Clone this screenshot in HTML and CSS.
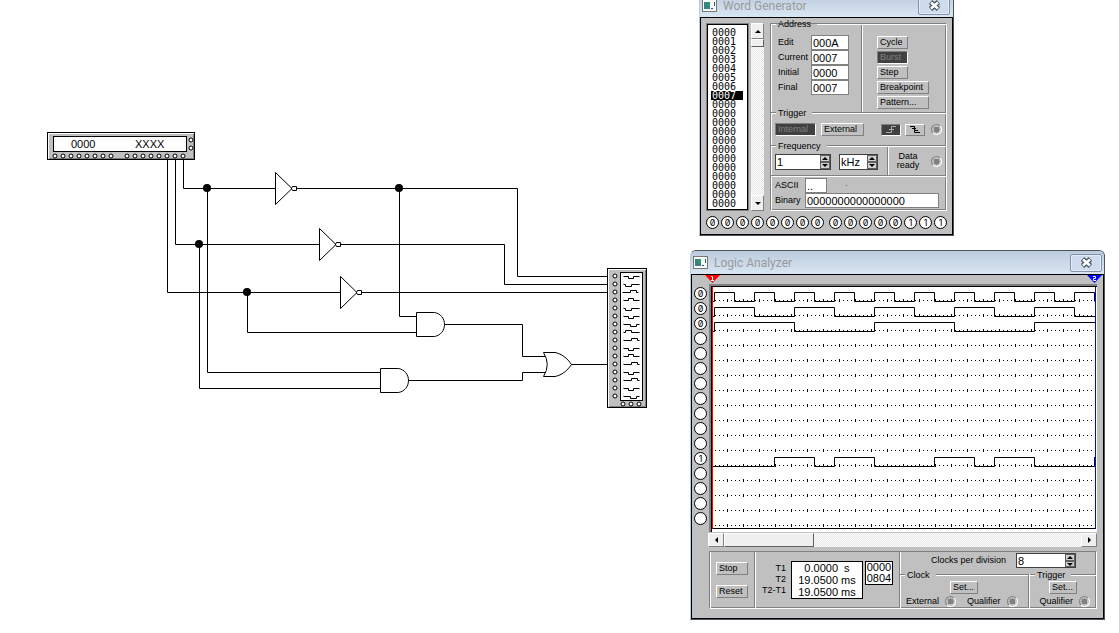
FILE: index.html
```html
<!DOCTYPE html>
<html lang="en">
<head>
<meta charset="utf-8">
<title>Logic circuit</title>
<link rel="stylesheet" href="styles.css">
</head>
<body>
<main class="desktop">
<svg class="circuit" width="690" height="620" viewBox="0 0 690 620" role="img" aria-label="Circuit diagram">
  <defs>
    <circle id="pin" r="2" fill="#fff" stroke="#000"/>
    <g id="pins8"><use href="#pin"/><use href="#pin" x="8"/><use href="#pin" x="16"/><use href="#pin" x="24"/><use href="#pin" x="32"/><use href="#pin" x="40"/><use href="#pin" x="48"/><use href="#pin" x="56"/></g>
    <g id="col8"><use href="#pin"/><use href="#pin" y="8"/><use href="#pin" y="16"/><use href="#pin" y="24"/><use href="#pin" y="32"/><use href="#pin" y="40"/><use href="#pin" y="48"/><use href="#pin" y="56"/></g>
    <path id="inv" d="M0 -16V16L16.5 0ZM17 -2H21V2H17L16 0Z" fill="#fff" stroke="#000"/>
    <path id="and" d="M0 -12H18C24 -11 28 -6 28 0S24 11 18 12H0Z" fill="#fff" stroke="#000"/>
    <path id="dm" d="M0 0H5V2H10V0H16"/><path id="dl" d="M0 0H2V2H8V0H16"/><path id="dr" d="M0 0H7V2H13V0H16"/>
    <path id="um" d="M0 0H5V-2H10V0H16"/><path id="ul" d="M0 0H2V-2H8V0H16"/><path id="ur" d="M0 0H8V-2H14V0H16"/>
  </defs>
  <g fill="none" stroke="#000">
    <path d="M183.5 158V188.5H275M297 188.5H517.5V276.5H608"/>
    <path d="M175.5 158V244.5H319M341 244.5H504.5V284.5H608"/>
    <path d="M167.5 158V292.5H340M362 292.5H608"/>
    <path d="M399.5 188V316.5H416M247.5 292V332.5H416M207.5 188V372.5H380M199.5 244V388.5H380"/>
    <path d="M444 324.5H522.5V356.5H545M408 380.5H522.5V372.5H545M571 364.5H608"/>
    <path d="M543.5 352.5H555C562 354 567 358 571.5 364.5C567 371 562 375 555 376.5H543.5Q551 364.5 543.5 352.5Z" fill="#fff"/>
  </g>
  <use href="#inv" x="275.5" y="188.5"/><use href="#inv" x="319.5" y="244.5"/><use href="#inv" x="340.5" y="292.5"/>
  <use href="#and" x="416.5" y="324.5"/><use href="#and" x="380.5" y="380.5"/>
  <circle cx="207" cy="188" r="4"/><circle cx="399" cy="188" r="4"/><circle cx="199" cy="244" r="4"/><circle cx="247" cy="292" r="4"/>

  <rect x="47.500" y="132.500" width="147" height="27" fill="#c0c0c0" stroke="#000"/>
  <path d="M48.500 159V133.500H194" fill="none" stroke="#fff"/><path d="M49 158.500H193.500V134" fill="none" stroke="#808080"/>
  <rect x="53.500" y="136.500" width="133" height="15" fill="#fff" stroke="#000"/>
  <text x="71" y="148" class="readout">0000</text><text x="135" y="148" class="readout">XXXX</text>
  <use href="#pins8" x="55" y="156"/><use href="#pins8" x="127" y="156"/>
  <use href="#pin" x="191" y="140"/><use href="#pin" x="191" y="148"/>

  <rect x="607.500" y="268.500" width="39" height="139" fill="#c0c0c0" stroke="#000"/>
  <path d="M608.500 407V269.500H646" fill="none" stroke="#fff"/><path d="M609 406.500H645.500V270" fill="none" stroke="#808080"/>
  <rect x="620.500" y="272.500" width="22" height="128" fill="#fff" stroke="#000"/>
  <use href="#col8" x="615" y="276"/><use href="#col8" x="615" y="340"/>
  <use href="#pin" x="623" y="404"/><use href="#pin" x="631" y="404"/><use href="#pin" x="639" y="404"/>
  <g fill="none" stroke="#000" transform="translate(623.5 276.500)">
    <use href="#dm"/><use href="#dl" y="8"/><use href="#ur" x="-1" y="16"/><use href="#um" y="24"/><use href="#dl" y="32"/><use href="#dm" y="40"/><use href="#dr" y="48"/><use href="#ul" y="56"/><use href="#ur" y="64"/><use href="#dm" y="72"/><use href="#um" y="80"/><use href="#ur" y="88"/><use href="#dm" y="96"/><use href="#ur" y="104"/><use href="#dm" y="112"/><use href="#dr" y="120"/>
  </g>
</svg>

<section class="window generator">
  <header class="titlebar"><svg class="appicon" width="15" height="13" viewBox="0 0 15 13"><rect x=".5" y=".5" width="14" height="12" fill="#f7f9fb" stroke="#777"/><path d="M2 3H8V10H2Z" fill="#3b7f86"/><path d="M5 3H8V7H5Z" fill="#2a9b5b"/><path d="M9 9H11V10H9ZM12 3H13V7H12Z" fill="#456"/></svg><h2>Word Generator</h2><button class="close" aria-label="Close"><svg width="13" height="11" viewBox="0 0 13 11"><path d="M2.500 2L10.500 9M10.500 2L2.500 9" stroke="#4d5763" stroke-width="5"/><path d="M3 2.500L10 8.500M10 2.500L3 8.500" stroke="#fff" stroke-width="2.500"/></svg></button></header>
  <div class="body gen-body">
    <div class="gen-main">
      <ol class="memory">
        <li>0000</li><li>0001</li><li>0002</li><li>0003</li><li>0004</li><li>0005</li><li>0006</li><li class="current">0007</li><li>0000</li><li>0000</li><li>0000</li><li>0000</li><li>0000</li><li>0000</li><li>0000</li><li>0000</li><li>0000</li><li>0000</li><li>0000</li><li>0000</li>
      </ol>
      <div class="vscroll"><button class="arrow up" aria-label="Scroll up"></button><span class="vthumb"></span><button class="arrow down" aria-label="Scroll down"></button></div>
      <div class="panel gen-panel">
        <h3 class="rule">Address</h3>
        <div class="address">
          <div class="fields">
            <label for="edit">Edit</label><input class="box" id="edit" value="000A">
            <label for="cur">Current</label><input class="box" id="cur" value="0007">
            <label for="ini">Initial</label><input class="box" id="ini" value="0000">
            <label for="fin">Final</label><input class="box" id="fin" value="0007">
          </div>
          <div class="modes"><button class="btn">Cycle</button><button class="btn on">Burst</button><button class="btn">Step</button><button class="btn wide">Breakpoint</button><button class="btn wide">Pattern...</button></div>
        </div>
        <h3 class="rule">Trigger</h3>
        <div class="trigger">
          <button class="btn on internal">Internal</button><button class="btn external">External</button>
          <button class="btn on edge rise" aria-label="Rising edge"><svg width="16" height="9" viewBox="0 0 16 9"><path d="M3 7.500H8.500V1.500H13M6 4.500H11" fill="none" stroke="#aaa"/></svg></button>
          <button class="btn edge" aria-label="Falling edge"><svg width="16" height="9" viewBox="0 0 16 9"><path d="M3 1.500H7.500V7.500H13M5 3.500H9M7 5.500H11" fill="none" stroke="#000"/></svg></button>
          <input type="radio" class="led" aria-label="External trigger">
        </div>
        <h3 class="rule">Frequency</h3>
        <div class="frequency">
          <div class="spin"><input aria-label="Frequency" value="1"><button class="arrow up" aria-label="Increase"></button><button class="arrow down" aria-label="Decrease"></button></div>
          <div class="spin unit"><input aria-label="Frequency unit" value="kHz"><button class="arrow up" aria-label="Next unit"></button><button class="arrow down" aria-label="Previous unit"></button></div>
          <div class="ready"><label for="ready">Data ready</label><input type="radio" class="led" id="ready"></div>
        </div>
        <div class="codes">
          <label for="ascii">ASCII</label><div class="asciirow"><input class="box short" id="ascii" value=".."><span class="teal">.</span></div>
          <label for="bin">Binary</label><input class="box" id="bin" value="0000000000000000">
        </div>
      </div>
    </div>
    <div class="bits">
      <div><b>0</b><b>0</b><b>0</b><b>0</b><b>0</b><b>0</b><b>0</b><b>0</b></div>
      <div><b>0</b><b>0</b><b>0</b><b>0</b><b>0</b><b>1</b><b>1</b><b>1</b></div>
    </div>
  </div>
</section>

<section class="window analyzer">
  <header class="titlebar"><svg class="appicon" width="15" height="13" viewBox="0 0 15 13"><rect x=".5" y=".5" width="14" height="12" fill="#f7f9fb" stroke="#777"/><path d="M2 3H8V10H2Z" fill="#3b7f86"/><path d="M5 3H8V7H5Z" fill="#2a9b5b"/><path d="M9 9H11V10H9ZM12 3H13V7H12Z" fill="#456"/></svg><h2>Logic Analyzer</h2><button class="close" aria-label="Close"><svg width="13" height="11" viewBox="0 0 13 11"><path d="M2.500 2L10.500 9M10.500 2L2.500 9" stroke="#4d5763" stroke-width="5"/><path d="M3 2.500L10 8.500M10 2.500L3 8.500" stroke="#fff" stroke-width="2.500"/></svg></button></header>
  <div class="body ana-body">
    <div class="channels"><b>0</b><b>0</b><b>0</b><b></b><b></b><b></b><b></b><b></b><b></b><b></b><b></b><b>1</b><b></b><b></b><b></b><b></b></div>
    <div class="scope">
      <div class="cursors"><svg width="15" height="9" viewBox="0 0 15 9"><path d="M0 0H15L7.500 8Z" fill="#f00"/><path d="M6 1.500H7.500V5.500M6 5.500H9" fill="none" stroke="#fff"/></svg><svg width="15" height="9" viewBox="0 0 15 9"><path d="M0 0H15L7.500 8Z" fill="#00f"/><path d="M6 1.500H8.500V3.500H6.500V5.500H9" fill="none" stroke="#fff"/></svg></div>
      <div class="plot">
        <svg width="384" height="242" viewBox="712 287 384 242" role="img" aria-label="Waveforms">
          <defs><pattern id="grid" x="715" y="299" width="16" height="15" patternUnits="userSpaceOnUse"><path d="M0 1H1V2H0ZM4 1H5V2H4ZM8 1H9V2H8ZM12 0H13V3H12Z"/></pattern></defs>
          <rect x="715" y="292" width="380" height="236" fill="url(#grid)"/>
          <g fill="none" stroke="#000">
            <path d="M713 301.500H714.500V292.500H734.500V301.500H754.500V292.500H774.500V301.500H794.500V292.500H814.500V301.500H834.500V292.500H854.500V301.500H874.500V292.500H894.500V301.500H914.500V292.500H934.500V301.500H954.500V292.500H974.500V301.500H994.500V292.500H1014.500V301.500H1034.500V292.500H1054.500V301.500H1074.500V292.500H1094.500V301.500"/>
            <path d="M713 316.500H714.500V307.500H754.500V316.500H794.500V307.500H834.500V316.500H874.500V307.500H914.500V316.500H954.500V307.500H994.500V316.500H1034.500V307.500H1074.500V316.500H1095"/>
            <path d="M713 331.500H714.500V322.500H794.500V331.500H874.500V322.500H954.500V331.500H1034.500V322.500H1095"/>
            <path d="M713 466.500H774.500V457.500H814.500V466.500H834.500V457.500H874.500V466.500H934.500V457.500H974.500V466.500H994.500V457.500H1034.500V466.500H1094.500V457"/>
            <path d="M712 528.500H1096"/><path d="M712.500 287V529" stroke="#f00"/><path d="M1095.500 287V529" stroke="#00f"/>
          </g>
        </svg>
      </div>
      <div class="hscroll"><button class="arrow left" aria-label="Scroll left"></button><span class="hthumb"></span><button class="arrow right" aria-label="Scroll right"></button></div>
      <div class="panel controls">
        <div class="run"><button class="btn">Stop</button><button class="btn">Reset</button></div>
        <div class="times">
          <div class="names"><span>T1</span><span>T2</span><span>T2-T1</span></div>
          <div class="values"><span>0.0000&nbsp; s</span><span>19.0500 ms</span><span>19.0500 ms</span></div>
          <div class="values hex"><span>0000</span><span>0804</span></div>
        </div>
        <div class="settings">
          <div class="division"><label for="cpd">Clocks per division</label><div class="spin"><input id="cpd" value="8"><button class="arrow up" aria-label="Increase"></button><button class="arrow down" aria-label="Decrease"></button></div></div>
          <div class="groups">
            <div class="clock"><h3 class="rule">Clock</h3><button class="btn set">Set...</button><div class="leds"><label for="ext">External</label><input type="radio" class="led" id="ext" name="clk"><label for="q1">Qualifier</label><input type="radio" class="led" id="q1" name="clk"></div></div>
            <div class="trig"><h3 class="rule">Trigger</h3><button class="btn set">Set...</button><div class="leds"><label for="q2">Qualifier</label><input type="radio" class="led" id="q2"></div></div>
          </div>
        </div>
      </div>
    </div>
  </div>
</section>
</main>
</body>
</html>
```

FILE: styles.css
```css
* { box-sizing: border-box; }
body { margin: 0; background: #fff; color: #000; font: 9px/11px "Liberation Sans", Arial, sans-serif; }
h2, h3, ol { margin: 0; padding: 0; font-weight: normal; font-size: inherit; list-style: none; }
button, input { font: inherit; color: inherit; margin: 0; padding: 0; border-radius: 0; border: 0; min-width: 0; }
svg { display: block; flex: none; }
.desktop { position: relative; min-height: 100vh; overflow: hidden; }
.readout { font-size: 11px; }

/* windows */
.window { position: absolute; border: 1px solid #4c535c; border-left-color: #b4cde4; border-radius: 6px 6px 0 0; background: #c0c0c0; overflow: hidden; }
.generator { left: 699px; top: -7px; width: 255px; }
.analyzer { left: 690px; top: 250px; width: 415px; }
.titlebar { display: flex; align-items: center; height: 23px; padding: 0 2px; gap: 6px; background: linear-gradient(#bccbdd, #d9e6f3); }
.titlebar h2 { flex: 1; font: 12px/14px Roboto, "Open Sans", sans-serif; color: #98999c; }
.generator .titlebar { padding-right: 3px; }
.close { display: flex; align-items: center; justify-content: center; width: 32px; height: 18px; border: 1px solid #8393ae; border-radius: 2px; background: #cedced; box-shadow: inset 0 0 0 1px #e3ebf5; }
.body { border: 1px solid #000; }

/* shared controls */
.btn { height: 13px; padding: 0 2px; text-align: left; line-height: 11px; background: #c0c0c0; border: 1px solid #fff; border-right-color: #808080; border-bottom-color: #808080; white-space: nowrap; }
.btn.on { background: #404040; color: #808080; border-color: #808080 #fff #fff #808080; }
.box { width: 100%; height: 15px; padding: 0 1px; font-size: 11px; background: #fff; border: 1px solid #808080; }
.led { appearance: none; flex: none; width: 11px; height: 11px; border-radius: 50%; border: 1px solid #808080; border-right-color: #fff; border-bottom-color: #fff; background: radial-gradient(circle, #808080 0 3px, #c0c0c0 3px); }
.panel { border: 1px solid #808080; border-right-color: #fff; border-bottom-color: #fff; box-shadow: inset 1px 0 #fff, inset -1px 0 #808080, inset 0 -1px #808080; }
.rule { display: flex; align-items: center; gap: 2px; height: 2px; line-height: 11px; white-space: nowrap; }
.rule::before, .rule::after { content: ""; height: 2px; background: linear-gradient(#808080 50%, #fff 50%); }
.rule::before { width: 5px; }
.rule::after { flex: 1; margin-left: 4px; }
.spin { display: grid; grid-template: 7px 7px / 1fr 10px; width: 56px; height: 16px; border: 1px solid #404040; background: #fff; }
.spin input { grid-row: 1 / 3; width: 100%; padding: 0 1px; font-size: 11px; background: #fff; }
.arrow { display: flex; align-items: center; justify-content: center; background: #efefef; border: 1px solid #fff; border-right-color: #808080; border-bottom-color: #808080; }
.spin .arrow { border: 1px solid #606060; background: #d0d0d0; }
.arrow::before { content: ""; border: 3px solid transparent; }
.up::before { border-top: 0; border-bottom-color: #000; }
.down::before { border-bottom: 0; border-top-color: #000; }
.left::before { border-left: 0; border-right-color: #000; }
.right::before { border-right: 0; border-left-color: #000; }
.vscroll, .hscroll { display: flex; background: repeating-conic-gradient(#fff 0 25%, #e6e6e6 0 50%) 0 0 / 2px 2px; }
.vthumb, .hthumb { background: #efefef; border: 1px solid #fff; border-right-color: #606060; border-bottom-color: #606060; }
b { display: flex; align-items: center; justify-content: center; width: 13px; height: 13px; border: 1px solid #000; border-radius: 50%; background: #fff; font: 9px/11px Inter, sans-serif; font-feature-settings: "zero"; }

/* word generator */
.gen-body { padding: 5px 5px 5px; }
.gen-main { display: flex; height: 188px; }
.memory { width: 43px; padding: 4px 0 0 3px; background: #fff; border: solid #808080; border-width: 1px 1px 1px 2px; outline: 1px solid #000; outline-offset: -2px; font: 10px/9px "DejaVu Sans Mono", monospace; }
.memory li { width: 32px; height: 9px; padding-left: 1px; }
.memory .current { background: #000; color: #fff; }
.vscroll { flex-direction: column; width: 13px; margin: 0 6px 0 2px; }
.vscroll .arrow { height: 16px; }
.vscroll .down { margin-top: auto; }
.vthumb { height: 8px; }
.gen-panel { flex: 1; display: flex; flex-direction: column; }
.gen-panel > .rule:first-child { margin-top: -1px; }
.address { display: flex; height: 87px; }
.fields { display: grid; grid-template-columns: 33px 38px; grid-auto-rows: 15px; align-items: center; align-content: start; padding: 10px 12px 0 7px; border-right: 1px solid #808080; width: 91px; }
.modes { display: flex; flex-direction: column; align-items: flex-start; gap: 2px; padding: 11px 0 0 14px; border-left: 1px solid #fff; }
.modes .btn { width: 31px; }
.modes .wide { width: 52px; }
.trigger { display: flex; align-items: center; height: 31px; padding: 0 4px; }
.internal { width: 41px; }
.external { width: 43px; margin-left: 5px; }
.edge { width: 20px; height: 12px; margin-right: 4px; padding: 0 1px; }
.rise { margin-left: auto; }
.trigger .led { margin-left: 2px; }
.frequency { display: flex; align-items: center; height: 28px; padding: 2px 4px 0 4px; gap: 8px; }
.spin.unit { width: 39px; }
.ready { flex: 1; display: flex; align-items: center; justify-content: space-between; align-self: stretch; padding-left: 7px; margin: -2px 0 0 1px; border-left: 1px solid #808080; box-shadow: inset 1px 0 #fff; }
.ready label { width: 26px; text-align: center; line-height: 9px; }
.codes { flex: 1; display: grid; grid-template-columns: 30px 1fr; align-content: center; align-items: center; padding: 0 7px 0 4px; border-top: 1px solid #808080; box-shadow: inset 0 1px #fff; }
.asciirow { display: flex; }
.box.short { width: 22px; }
.teal { margin-left: 18px; color: #008080; }
.bits { display: flex; justify-content: space-between; margin-top: 5px; }
.bits div { display: flex; gap: 2px; }

/* logic analyzer */
.ana-body { display: flex; padding: 0 6px 9px 2px; }
.channels { display: flex; flex-direction: column; gap: 2px; padding-top: 12px; }
.scope { flex: 1; min-width: 0; }
.cursors { display: flex; justify-content: space-between; height: 9px; margin: 0 -5px 0 -2px; }
.plot { margin-left: 2px; background: #fff; border: solid #808080; border-width: 2px 0 0 2px; box-shadow: inset 1px 1px #000; padding: 1px 2px 3px 1px; }
.hscroll { height: 14px; margin: 1px 0 4px 1px; }
.hscroll .arrow { width: 16px; }
.hthumb { width: 90px; }
.hscroll .right { margin-left: auto; }
.controls { display: flex; height: 58px; margin-left: 2px; }
.run { display: flex; flex-direction: column; gap: 10px; width: 44px; padding: 10px 0 0 6px; }
.run .btn { width: 32px; }
.times { display: flex; align-items: flex-start; gap: 2px; width: 145px; padding: 9px 0 0 4px; border-left: 1px solid #808080; box-shadow: inset 1px 0 #fff; }
.names { width: 27px; margin-right: 3px; padding-top: 2px; text-align: right; }
.names span, .values span { display: block; }
.values { width: 72px; border: 1px solid #000; background: #fff; font-size: 11px; line-height: 12px; text-align: center; white-space: nowrap; }
.values.hex { width: 28px; line-height: 11px; }
.settings { flex: 1; display: flex; flex-direction: column; border-left: 1px solid #808080; box-shadow: inset 1px 0 #fff; }
.division { display: flex; align-items: center; justify-content: flex-end; gap: 10px; height: 22px; padding: 0 20px 5px 0; }
.division .spin { width: 60px; height: 15px; grid-template-rows: 7px 6px; }
.groups { flex: 1; display: flex; }
.clock { width: 129px; border-right: 1px solid #808080; }
.trig { flex: 1; border-left: 1px solid #fff; }
.set { display: block; width: 28px; margin: 5px 0 0 50px; }
.trig .set { margin-left: 19px; }
.leds { display: flex; align-items: center; gap: 6px; padding: 2px 6px 0; }
.clock .led + label { margin-left: 5px; }
.trig .leds { justify-content: flex-end; }
```
